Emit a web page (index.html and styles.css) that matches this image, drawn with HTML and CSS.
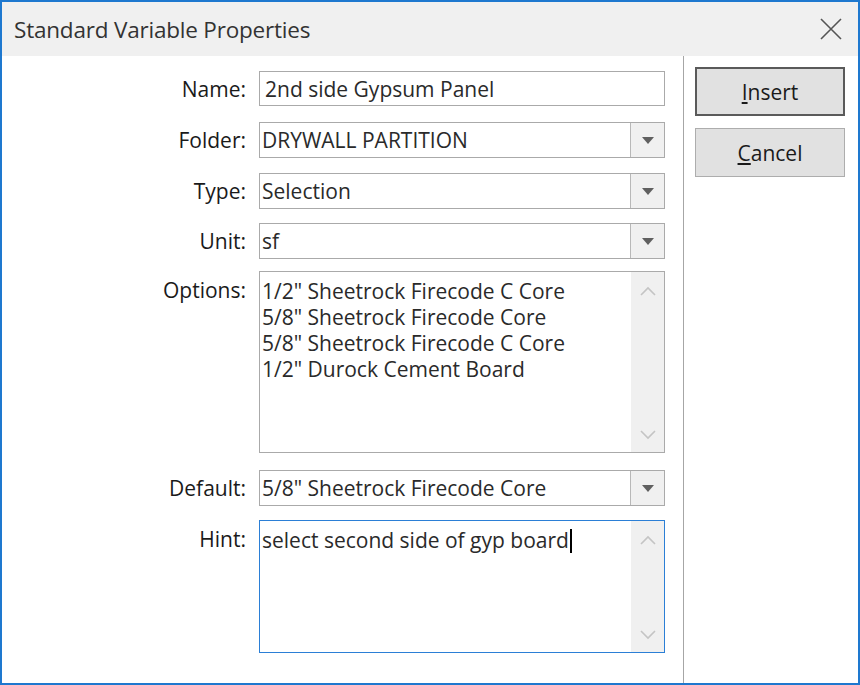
FILE: index.html
```html
<!DOCTYPE html>
<html>
<head>
<meta charset="utf-8">
<link rel="stylesheet" href="styles.css">
</head>
<body>
<div class="window">
  <div class="titlebar">
    <span class="title">Standard Variable Properties</span>
    <svg class="close" width="22" height="22" viewBox="0 0 22 22"><path d="M1 1 L21 21 M21 1 L1 21" stroke="#555" stroke-width="1.6" fill="none"/></svg>
  </div>
  <div class="content">
    <div class="form">
      <div class="row r-name">
        <label class="lbl">Name:</label>
        <div class="field text"><span class="val">2nd side Gypsum Panel</span></div>
      </div>
      <div class="row r-folder">
        <label class="lbl">Folder:</label>
        <div class="field combo"><span class="val">DRYWALL PARTITION</span><span class="drop"><svg width="12" height="7" viewBox="0 0 12 7"><path d="M0 0 H12 L6 7 Z" fill="#606060"/></svg></span></div>
      </div>
      <div class="row r-type">
        <label class="lbl">Type:</label>
        <div class="field combo"><span class="val">Selection</span><span class="drop"><svg width="12" height="7" viewBox="0 0 12 7"><path d="M0 0 H12 L6 7 Z" fill="#606060"/></svg></span></div>
      </div>
      <div class="row r-unit">
        <label class="lbl">Unit:</label>
        <div class="field combo"><span class="val">sf</span><span class="drop"><svg width="12" height="7" viewBox="0 0 12 7"><path d="M0 0 H12 L6 7 Z" fill="#606060"/></svg></span></div>
      </div>
      <div class="row r-options top">
        <label class="lbl">Options:</label>
        <div class="field area">
          <div class="lines">
            <div>1/2" Sheetrock Firecode C Core</div>
            <div>5/8" Sheetrock Firecode Core</div>
            <div>5/8" Sheetrock Firecode C Core</div>
            <div>1/2" Durock Cement Board</div>
          </div>
          <div class="scroll">
            <svg width="16" height="10" viewBox="0 0 16 10"><path d="M1 9 L8 2 L15 9" stroke="#c4c4c4" stroke-width="1.6" fill="none"/></svg>
            <svg width="16" height="10" viewBox="0 0 16 10"><path d="M1 1 L8 8 L15 1" stroke="#c4c4c4" stroke-width="1.6" fill="none"/></svg>
          </div>
        </div>
      </div>
      <div class="row r-default">
        <label class="lbl">Default:</label>
        <div class="field combo"><span class="val">5/8" Sheetrock Firecode Core</span><span class="drop"><svg width="12" height="7" viewBox="0 0 12 7"><path d="M0 0 H12 L6 7 Z" fill="#606060"/></svg></span></div>
      </div>
      <div class="row r-hint top">
        <label class="lbl">Hint:</label>
        <div class="field area focused">
          <div class="lines"><div>select second side of gyp board<span class="caret"></span></div></div>
          <div class="scroll">
            <svg width="16" height="10" viewBox="0 0 16 10"><path d="M1 9 L8 2 L15 9" stroke="#c4c4c4" stroke-width="1.6" fill="none"/></svg>
            <svg width="16" height="10" viewBox="0 0 16 10"><path d="M1 1 L8 8 L15 1" stroke="#c4c4c4" stroke-width="1.6" fill="none"/></svg>
          </div>
        </div>
      </div>
    </div>
    <div class="side">
      <button class="btn default-btn"><u>I</u>nsert</button>
      <button class="btn"><u>C</u>ancel</button>
    </div>
  </div>
</div>
</body>
</html>
```

FILE: styles.css
```css
html, body {
  margin: 0;
  padding: 0;
  background: #ffffff;
}
body {
  font-family: "Open Sans", "Noto Sans", sans-serif;
  font-size: 21px;
  color: #1f1f1f;
}
.window {
  width: 860px;
  height: 685px;
  box-sizing: border-box;
  border: 2px solid #1e78cf;
  display: flex;
  flex-direction: column;
  background: #ffffff;
}
.titlebar {
  height: 54px;
  background: #f0f0f0;
  display: flex;
  align-items: center;
  justify-content: space-between;
  padding: 0 16px 0 12px;
  flex-shrink: 0;
}
.title {
  font-size: 22.5px;
  color: #333333;
  letter-spacing: -0.2px;
}
.close {
  display: block;
}
.content {
  flex: 1;
  display: flex;
  background: #ffffff;
}
.form {
  width: 681px;
  box-sizing: border-box;
  padding-top: 15px;
  display: flex;
  flex-direction: column;
}
.row {
  display: flex;
  align-items: center;
  gap: 13px;
}
.row.top {
  align-items: flex-start;
}
.r-name { height: 35px; }
.r-folder { height: 36px; margin-top: 16px; }
.r-type { height: 36px; margin-top: 15px; }
.r-unit { height: 36px; margin-top: 14px; }
.r-options { height: 182px; margin-top: 12px; }
.r-default { height: 36px; margin-top: 17px; }
.r-hint { height: 133px; margin-top: 14px; }
.lbl {
  width: 244px;
  text-align: right;
  color: #1a1a1a;
  flex-shrink: 0;
}
.row.top .lbl {
  padding-top: 6px;
  line-height: 26px;
}
.field {
  width: 406px;
  height: 100%;
  box-sizing: border-box;
  border: 1px solid #aaaaaa;
  background: #ffffff;
  display: flex;
  align-items: center;
  color: #2a2a2a;
}
.text {
  padding-left: 5px;
}
.combo {
  padding-left: 2px;
}
.combo .val {
  flex: 1;
}
.drop {
  width: 33px;
  height: 100%;
  border-left: 1px solid #b8b8b8;
  background: #f0f0f0;
  display: flex;
  align-items: center;
  justify-content: center;
}
.area {
  align-items: stretch;
}
.lines {
  flex: 1;
  padding: 6px 0 0 2px;
  line-height: 26px;
}
.scroll {
  width: 33px;
  background: #f0f0f0;
  display: flex;
  flex-direction: column;
  justify-content: space-between;
  align-items: center;
  padding: 14px 0 12px;
  box-sizing: border-box;
}
.focused {
  border-color: #2b7fd6;
}
.caret {
  display: inline-block;
  width: 2px;
  height: 24px;
  background: #000;
  vertical-align: -5px;
  margin-left: 1px;
}
.side {
  flex: 1;
  border-left: 1px solid #a6a6a6;
  padding: 11px 0 0 11px;
  display: flex;
  flex-direction: column;
  gap: 12px;
}
.btn {
  width: 150px;
  height: 49px;
  box-sizing: border-box;
  background: #e1e1e1;
  border: 1px solid #adadad;
  font-family: "Open Sans", "Noto Sans", sans-serif;
  font-size: 21px;
  color: #1a1a1a;
  padding: 0;
}
.default-btn {
  border: 2px solid #5a5a5a;
}
```
